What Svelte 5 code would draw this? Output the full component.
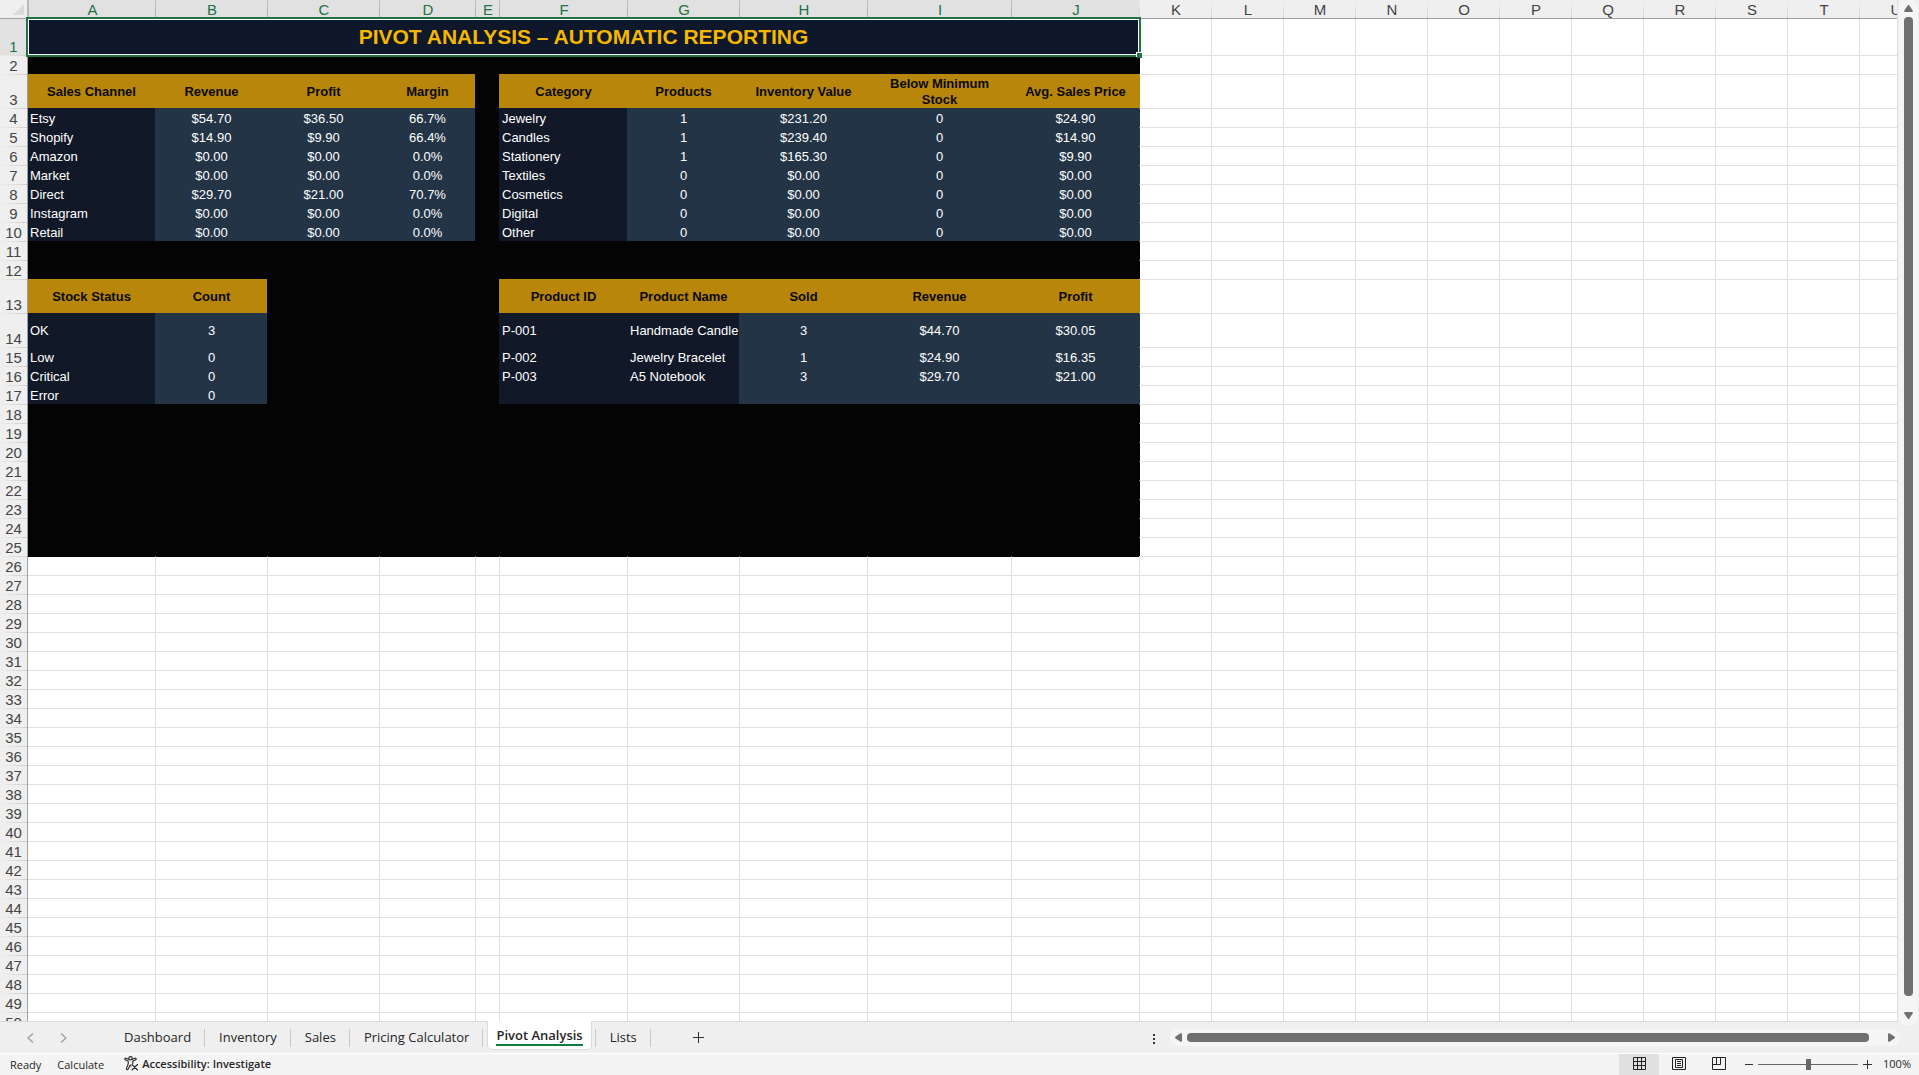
<script>
  const columns = [
    { name: 'A', width: 127 }, { name: 'B', width: 112 }, { name: 'C', width: 112 },
    { name: 'D', width: 96 }, { name: 'E', width: 24 }, { name: 'F', width: 128 },
    { name: 'G', width: 112 }, { name: 'H', width: 128 }, { name: 'I', width: 144 },
    { name: 'J', width: 128 },
    ...'KLMNOPQRSTU'.split('').map((name) => ({ name, width: 72 }))
  ];
  const tableWidth = 28 + columns.reduce((sum, c) => sum + c.width, 0);
  const usedColumns = 10;
  const usedRows = 25;

  const values = {};
  const kinds = {};

  // Writes a block of rows at a cell: a header row, then label and value cells.
  function block(col, row, head, labelCols, lines, depth = lines.length) {
    head.forEach((text, i) => {
      values[`${row}:${col + i}`] = text;
      kinds[`${row}:${col + i}`] = 'head';
    });
    for (let r = 0; r < depth; r++) {
      head.forEach((_, i) => {
        const key = `${row + 1 + r}:${col + i}`;
        values[key] = lines[r]?.[i] ?? '';
        kinds[key] = i < labelCols ? 'label' : 'value';
      });
    }
  }

  block(0, 3, ['Sales Channel', 'Revenue', 'Profit', 'Margin'], 1, [
    ['Etsy', '$54.70', '$36.50', '66.7%'],
    ['Shopify', '$14.90', '$9.90', '66.4%'],
    ['Amazon', '$0.00', '$0.00', '0.0%'],
    ['Market', '$0.00', '$0.00', '0.0%'],
    ['Direct', '$29.70', '$21.00', '70.7%'],
    ['Instagram', '$0.00', '$0.00', '0.0%'],
    ['Retail', '$0.00', '$0.00', '0.0%']
  ]);
  block(5, 3, ['Category', 'Products', 'Inventory Value', 'Below Minimum Stock', 'Avg. Sales Price'], 1, [
    ['Jewelry', '1', '$231.20', '0', '$24.90'],
    ['Candles', '1', '$239.40', '0', '$14.90'],
    ['Stationery', '1', '$165.30', '0', '$9.90'],
    ['Textiles', '0', '$0.00', '0', '$0.00'],
    ['Cosmetics', '0', '$0.00', '0', '$0.00'],
    ['Digital', '0', '$0.00', '0', '$0.00'],
    ['Other', '0', '$0.00', '0', '$0.00']
  ]);
  block(0, 13, ['Stock Status', 'Count'], 1, [
    ['OK', '3'], ['Low', '0'], ['Critical', '0'], ['Error', '0']
  ]);
  block(5, 13, ['Product ID', 'Product Name', 'Sold', 'Revenue', 'Profit'], 2, [
    ['P-001', 'Handmade Candle', '3', '$44.70', '$30.05'],
    ['P-002', 'Jewelry Bracelet', '1', '$24.90', '$16.35'],
    ['P-003', 'A5 Notebook', '3', '$29.70', '$21.00']
  ], 4);

  const rows = Array.from({ length: 50 }, (_, i) => i + 1);
  const tallRows = [3, 13, 14];

  function cellClass(row, col) {
    if (row <= usedRows && col < usedColumns) return kinds[`${row}:${col}`] ?? 'dark';
    if (row <= usedRows && col === usedColumns) return 'after-' + (kinds[`${row}:${col - 1}`] ?? 'dark');
    if (row === usedRows + 1 && col < usedColumns) return 'under-dark';
    return '';
  }

  const tabs = ['Dashboard', 'Inventory', 'Sales', 'Pricing Calculator', 'Pivot Analysis', 'Lists'];
  let active = $state('Pivot Analysis');
  let view = $state('Normal');
  let zoom = $state(100);
</script>

<div class="app">
  <div class="work">
    <main class="pane">
      <table style:width="{tableWidth}px">
        <colgroup>
          <col class="gutter" />
          {#each columns as c}<col style:width="{c.width}px" />{/each}
        </colgroup>
        <thead>
          <tr>
            <th class="corner" aria-label="Select all">
              <svg width="11" height="11" viewBox="0 0 11 11"><path d="M11 0V11H0Z" fill="#dadada" /></svg>
            </th>
            {#each columns as c, i}
              <th scope="col" class:picked={i < usedColumns}>{c.name}</th>
            {/each}
          </tr>
        </thead>
        <tbody>
          {#each rows as row}
            <tr class:first={row === 1} class:tall={tallRows.includes(row)}>
              <th scope="row" class:picked={row === 1}>{row}</th>
              {#if row === 1}
                <td class="title" colspan={usedColumns}>
                  PIVOT ANALYSIS – AUTOMATIC REPORTING
                  <span class="outline"><span class="handle"></span></span>
                </td>
                {#each columns.slice(usedColumns) as _}<td></td>{/each}
              {:else}
                {#each columns as _, col}
                  <td class={cellClass(row, col)}>{values[`${row}:${col}`] ?? ''}</td>
                {/each}
              {/if}
            </tr>
          {/each}
        </tbody>
      </table>
    </main>
    <div class="vscroll">
      <button class="arrow" aria-label="Scroll up">
        <svg width="9" height="7" viewBox="0 0 9 7"><path d="M3.600 .6Q4.500 -.5 5.400 .6L8.700 5.600Q9 7 8 7H1Q0 7 .3 5.600Z" fill="#707070" /></svg>
      </button>
      <div class="vthumb"></div>
      <button class="arrow" aria-label="Scroll down">
        <svg width="9" height="7" viewBox="0 0 9 7"><path d="M3.600 6.400Q4.500 7.500 5.400 6.400L8.700 1.400Q9 0 8 0H1Q0 0 .3 1.400Z" fill="#707070" /></svg>
      </button>
    </div>
  </div>

  <div class="tabbar">
    <div class="steps">
      <button aria-label="Previous sheet">
        <svg width="7" height="10" viewBox="0 0 7 10"><path d="M6 .5L1 5L6 9.500" fill="none" stroke="#a0a0a0" stroke-width="1.400" /></svg>
      </button>
      <button aria-label="Next sheet">
        <svg width="7" height="10" viewBox="0 0 7 10"><path d="M1 .5L6 5L1 9.500" fill="none" stroke="#a0a0a0" stroke-width="1.400" /></svg>
      </button>
    </div>
    <nav class="tabs" aria-label="Sheets">
      {#each tabs as tab}
        <button class="tab" class:active={tab === active} onclick={() => (active = tab)}><span>{tab}</span></button>
      {/each}
    </nav>
    <button class="add" aria-label="New sheet">
      <svg width="11" height="11" viewBox="0 0 11 11"><path d="M5.500 0V11M0 5.500H11" stroke="#333" stroke-width="1" /></svg>
    </button>
    <button class="grip" aria-label="Resize tabs">
      <svg width="2" height="10" viewBox="0 0 2 10"><path d="M0 0h2v2H0zM0 4h2v2H0zM0 8h2v2H0z" fill="#333" /></svg>
    </button>
    <div class="hscroll">
      <button class="arrow" aria-label="Scroll left">
        <svg width="7" height="9" viewBox="0 0 7 9"><path d="M.6 3.600Q-.5 4.500 .6 5.400L5.600 8.700Q7 9 7 8V1Q7 0 5.600 .3Z" fill="#707070" /></svg>
      </button>
      <div class="hthumb"></div>
      <button class="arrow right" aria-label="Scroll right">
        <svg width="7" height="9" viewBox="0 0 7 9"><path d="M6.400 3.600Q7.500 4.500 6.400 5.400L1.400 8.700Q0 9 0 8V1Q0 0 1.400 .3Z" fill="#707070" /></svg>
      </button>
    </div>
  </div>

  <footer class="status">
    <span class="ready">Ready</span>
    <span class="calc">Calculate</span>
    <button class="access">
      <svg width="15" height="15" viewBox="0 0 15 15" fill="none" stroke="#262626" stroke-width="1.100" stroke-linejoin="round" stroke-linecap="round">
        <circle cx="6.500" cy="2.300" r="1.700" />
        <path d="M4.800 3.300L2 2.200Q.7 2 .8 3.100Q.9 3.600 1.600 3.900L4.200 5V8L2.500 12.400Q2.300 13.600 3.200 13.700Q3.900 13.700 4.200 13L6.300 9L7 10M8.200 3.300L11 2.200Q12.300 2 12.200 3.100Q12.100 3.600 11.400 3.900L8.800 5V7.500" />
        <path d="M8 8.500L13.500 14M13.500 8.500L8 14" />
      </svg>
      Accessibility: Investigate
    </button>
    <div class="views">
      <button class:on={view === 'Normal'} aria-label="Normal view" onclick={() => (view = 'Normal')}>
        <svg width="13" height="13" viewBox="0 0 13 13" fill="none" stroke="#222"><path d="M.5 .5h12v12H.5zM4.500 0v13M8.500 0v13M0 4.500h13M0 8.500h13" /></svg>
      </button>
      <button class:on={view === 'Page'} aria-label="Page layout view" onclick={() => (view = 'Page')}>
        <svg width="14" height="13" viewBox="0 0 14 13" fill="none" stroke="#222"><path d="M.5 .5h13v12H.5zM3.500 2.500h7v8h-7zM5 4.500h4M5 6.500h4M5 8.500h4" /></svg>
      </button>
      <button class:on={view === 'Break'} aria-label="Page break preview" onclick={() => (view = 'Break')}>
        <svg width="14" height="13" viewBox="0 0 14 13" fill="none" stroke="#222"><path d="M.5 .5h13v12H.5zM.5 7.500h8v-7M4.500 .5v7" /></svg>
      </button>
    </div>
    <div class="zoom">
      <button aria-label="Zoom out" onclick={() => (zoom = Math.max(10, zoom - 10))}>
        <svg width="8" height="9" viewBox="0 0 8 9"><path d="M0 4.500H8" stroke="#333" /></svg>
      </button>
      <input type="range" min="10" max="190" aria-label="Zoom" bind:value={zoom} />
      <button aria-label="Zoom in" onclick={() => (zoom = Math.min(190, zoom + 10))}>
        <svg width="9" height="9" viewBox="0 0 9 9"><path d="M4.500 0V9M0 4.500H9" stroke="#333" /></svg>
      </button>
      <span class="percent">{zoom}%</span>
    </div>
  </footer>
</div>

<style>
  :global(body) {
    margin: 0;
    overflow: hidden;
  }
  .app {
    height: 100vh;
    display: flex;
    flex-direction: column;
    background: #efefef;
    font-family: 'Open Sans', 'Noto Sans', sans-serif;
    color: #262626;
  }
  button {
    border: 0;
    padding: 0;
    margin: 0;
    background: none;
    font: inherit;
    color: inherit;
    display: flex;
    align-items: center;
    justify-content: center;
  }
  svg {
    display: block;
    flex: none;
  }

  .work {
    flex: 1;
    min-height: 0;
    display: flex;
  }
  .pane {
    flex: 1;
    min-width: 0;
    overflow: hidden;
    background: #fff;
    border-right: 1px solid #e0e0e0;
    border-bottom: 1px solid #dadada;
  }
  table {
    table-layout: fixed;
    border-collapse: separate;
    border-spacing: 0;
    font-family: 'Liberation Sans', Arial, sans-serif;
    font-size: 13px;
    line-height: 16px;
  }
  .gutter {
    width: 28px;
  }
  th,
  td {
    box-sizing: border-box;
    padding: 0;
    overflow: hidden;
    white-space: nowrap;
  }
  th {
    font-size: 15px;
    line-height: 16px;
    font-weight: 400;
    color: #444;
    text-align: center;
    vertical-align: bottom;
    background-color: #efefef;
  }
  thead th {
    height: 19px;
    padding: 2px 0 0 2px;
    border-bottom: 1px solid #9f9f9f;
    background-image: linear-gradient(#efefef, #cfcfcf);
    background-size: 1px 100%;
    background-repeat: no-repeat;
  }
  thead th.picked {
    background-color: #e1e1e1;
    background-image: linear-gradient(#bdbdbd, #b0b0b0);
    color: #217346;
  }
  thead th.corner {
    background-image: none;
    border-right: 1px solid #b8b8b8;
    padding: 0 3px 3px 13px;
  }
  tbody th {
    border-right: 1px solid #9f9f9f;
    background-image: linear-gradient(90deg, #efefef, #cfcfcf);
    background-size: 100% 1px;
    background-repeat: no-repeat;
  }
  tbody th.picked {
    background-color: #e1e1e1;
    background-image: none;
    color: #217346;
  }
  td {
    height: 19px;
    border-left: 1px solid #e0e0e0;
    border-top: 1px solid #e0e0e0;
    vertical-align: middle;
    text-align: center;
  }
  td:nth-child(2) {
    border-left: 0;
  }
  .first td {
    height: 36px;
    border-top: 0;
  }
  .tall td {
    height: 34px;
  }
  td.dark,
  td.head,
  td.label,
  td.value {
    border-color: transparent;
  }
  .dark {
    background: #040404;
  }
  .head {
    padding: 0 4px;
    background: #b8860b;
    color: #0a0a0a;
    font-weight: 700;
    white-space: normal;
  }
  .label {
    padding: 2px 0 0 2px;
    background: #111827;
    color: #fff;
    text-align: left;
  }
  .value {
    padding-top: 2px;
    background: #233446;
    color: #fff;
  }
  .tall .label,
  .tall .value {
    padding-top: 0;
  }
  td.after-dark {
    border-left-color: #040404;
  }
  td.after-head {
    border-left-color: #b8860b;
  }
  td.after-value {
    border-left-color: #233446;
  }
  td.under-dark {
    border-top-color: #040404;
  }
  td.title {
    position: relative;
    overflow: visible;
    background: #0f172a;
    color: #f5b800;
    font-size: 21px;
    font-weight: 700;
    line-height: 24px;
  }
  .outline {
    position: absolute;
    inset: -2px -2px -2px -2px;
    border: 2px solid #217346;
    box-shadow: inset 0 0 0 1px #fff;
  }
  .handle {
    position: absolute;
    right: -3px;
    bottom: -3px;
    width: 5px;
    height: 5px;
    background: #217346;
    box-shadow: -1px -1px 0 #fff;
  }

  .vscroll {
    position: relative;
    width: 19px;
    margin: 0 1px -3px;
    border-radius: 8px;
    background: #f5f5f5;
    display: flex;
    flex-direction: column;
    align-items: center;
    box-sizing: border-box;
    padding: 5px 0 6px;
    gap: 5px;
  }
  .vthumb {
    flex: 1;
    width: 9px;
    margin-bottom: 11px;
    border-radius: 4px;
    background: #707070;
  }

  .tabbar {
    height: 31px;
    display: flex;
    align-items: center;
    font-size: 13px;
    line-height: 18px;
    border-bottom: 1px solid #fff;
  }
  .steps {
    display: flex;
    gap: 26px;
    width: 83px;
    padding-left: 27px;
  }
  .tabs {
    align-self: stretch;
    display: flex;
    align-items: center;
  }
  .tab {
    height: 18px;
    padding: 0 13px 2px 14px;
    border-right: 1px solid #c8c8c8;
  }
  .tab.active {
    align-self: flex-start;
    height: 29px;
    box-sizing: border-box;
    margin: -1px 3px 0 4px;
    padding: 2px 8px;
    background: #fff;
    border: 1px solid #dadada;
    border-top-color: #fff;
    border-radius: 0 0 5px 5px;
    font-weight: 600;
  }
  .tab.active span {
    border-bottom: 2px solid #107c41;
  }
  .tab.active + .tab {
    border-left: 1px solid #c8c8c8;
  }
  .add {
    margin-left: 42px;
  }
  .grip {
    margin-left: auto;
    padding: 2px 15px 0 0;
  }
  .hscroll {
    flex: 0 1 730px;
    height: 17px;
    margin-right: 19px;
    border-radius: 8px;
    background: #f5f5f5;
    display: flex;
    align-items: center;
    gap: 5px;
    box-sizing: border-box;
    padding: 0 5px;
  }
  .hthumb {
    flex: 1;
    height: 9px;
    border-radius: 4px;
    background: #707070;
  }
  .right {
    margin-left: 14px;
  }

  .status {
    height: 21px;
    display: flex;
    align-items: center;
    background: #f4f4f4;
    font-size: 11px;
    line-height: 16px;
    padding-left: 10px;
  }
  .calc {
    margin-left: 16px;
  }
  .access {
    margin-left: 20px;
    padding-bottom: 2px;
    gap: 3px;
    font-weight: 600;
  }
  .views {
    align-self: stretch;
    display: flex;
    margin-left: auto;
  }
  .views button {
    width: 40px;
    padding-bottom: 2px;
  }
  .views .on {
    background: #e0e0e0;
  }
  .zoom {
    display: flex;
    align-items: center;
    gap: 5px;
    width: 174px;
    padding: 0 0 1px 6px;
  }
  .zoom input {
    appearance: none;
    width: 100px;
    height: 11px;
    margin: 0;
    background: linear-gradient(#666, #666) center / 100% 1px no-repeat;
  }
  .zoom input::-webkit-slider-thumb {
    appearance: none;
    width: 5px;
    height: 11px;
    background: #666;
  }
  .percent {
    margin-left: auto;
    margin-right: 8px;
  }
</style>
